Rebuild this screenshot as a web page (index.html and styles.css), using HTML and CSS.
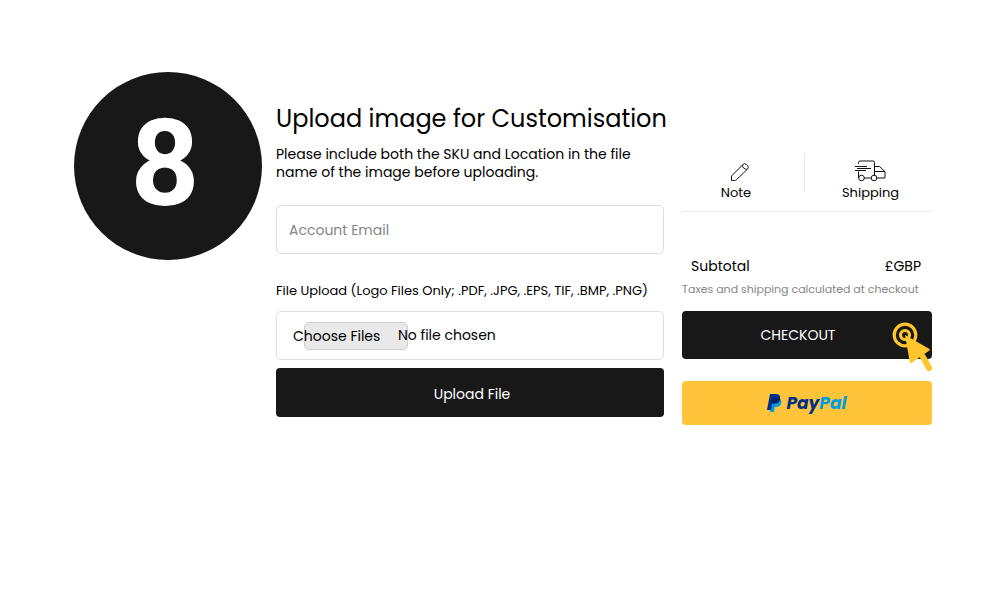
FILE: index.html
```html
<!DOCTYPE html>
<html lang="en">

<head>
    <meta charset="UTF-8">
    <meta name="viewport" content="width=device-width, initial-scale=1.0">
    <title>Upload image for Customisation</title>
    <link rel="stylesheet" href="styles.css">
</head>

<body>
    <main class="content">
        <div class="step">8</div>

        <form class="upload">
            <h1>Upload image for Customisation</h1>
            <p class="intro">Please include both the SKU and Location in the file name of the image before uploading.</p>
            <input class="email" type="email" placeholder="Account Email" aria-label="Account Email">
            <label class="fileLabel" for="files">File Upload (Logo Files Only; .PDF, .JPG, .EPS, TIF, .BMP, .PNG)</label>
            <div class="fileBox">
                <span class="choose">Choose Files</span>
                <span class="chosen">No file chosen</span>
                <input type="file" id="files" multiple>
            </div>
            <button class="btn" type="button">Upload File</button>
        </form>

        <aside class="cart">
            <div class="tools">
                <a class="tool note" href="#">
                    <svg width="28" height="20" viewBox="-8 1 28 20">
                        <path d="M1.500 18.500v-4.500L13 2.400q1.700-1.600 3.300 0l1.300 1.300q1.600 1.600 0 3.300L6.200 18q-.6.500-1.500.5h-2q-1.200 0-1.200-1.200zM12.500 3.100q-.1 3.500 4.400 4.400" />
                    </svg>
                    Note
                </a>
                <span class="line"></span>
                <a class="tool shipping" href="#">
                    <svg width="32" height="22" viewBox="1 1 32 22">
                        <path d="M4.500 4V2.500Q4.500 1 6 1h13q1.500 0 1.500 1.500V16M4.500 11.500V18M10 18h7M22.500 18H31v-6.500L25.500 6.500h-5M21 11.500h10M1 6.500h12M3 8.500h14M1 10.500h11" />
                        <circle cx="7.500" cy="18" r="2.800" />
                        <circle cx="20" cy="18" r="2.800" />
                    </svg>
                    Shipping
                </a>
            </div>
            <div class="subtotal">
                <span>Subtotal</span>
                <span>£GBP</span>
            </div>
            <p class="taxes">Taxes and shipping calculated at checkout</p>
            <div class="checkout">
                <button class="btn" type="button">CHECKOUT</button>
                <svg class="pointer" width="42" height="52" viewBox="0 0 42 52">
                    <g fill="none" stroke="#ffc52d">
                        <circle cx="14" cy="14" r="10.800" stroke-width="3.200" />
                        <circle cx="14" cy="14" r="4.500" stroke-width="3.200" />
                        <path d="M32 36l6 11" stroke-width="6" stroke-linecap="round" />
                    </g>
                    <path d="M14 14l24.500 14q1 1-.5 1.700L20.500 42q-1.500.6-1.700-1z" fill="#ffc52d" />
                </svg>
            </div>
            <button class="paypal" type="button" aria-label="PayPal">
                <svg width="15" height="20" viewBox="0 0 15 20">
                    <path d="M5 5h7q3 1.500 2.200 5-.9 4-5.200 4H7.700L7 19H3.200z" fill="#009cde" />
                    <path d="M3 1h6.500q4.500.3 3.500 5-1 4.500-5.500 4.500H5L4 17H0z" fill="#003087" />
                    <path d="M5.500 5.500q.2-.7 1-.7h5q1 0 1.500.4-.8 5.300-5.500 5.300H4.700z" fill="#012169" />
                </svg>
                <span class="pay">Pay<span class="pal">Pal</span></span>
            </button>
        </aside>
    </main>
</body>

</html>
```

FILE: styles.css
```css
* {
    box-sizing: border-box;
}

body,
h1,
p {
    padding: 0;
    margin: 0;
}

body,
input,
button {
    font-family: Poppins, Inter, sans-serif;
    font-size: 14px;
}

body {
    background-color: #fff;
    color: #000;
}

.content {
    display: grid;
    grid-template-columns: 188px minmax(0, 1fr) 250px;
    align-items: start;
    padding: 72px 68px 0 74px;
}

/* step number */
.step {
    display: flex;
    align-items: center;
    justify-content: center;
    height: 188px;
    padding: 0 6px 4px 0;
    border-radius: 50%;
    background-color: #181818;
    color: #fff;
    font-family: Roboto, sans-serif;
    font-size: 120px;
    font-weight: 700;
    line-height: 1;
}

/* upload form */
.upload {
    display: flex;
    flex-direction: column;
    padding: 28px 18px 0 14px;
}

h1 {
    font-size: 24px;
    font-weight: 400;
    line-height: 38px;
    white-space: nowrap;
}

.intro {
    margin-top: 7px;
    line-height: 18px;
}

.email {
    height: 49px;
    margin-top: 24px;
    padding: 2px 12px 0;
    border: 1px solid #dedede;
    border-radius: 5px;
}

.email::placeholder {
    color: #868686;
}

.fileLabel {
    margin-top: 27px;
    font-size: 13px;
    line-height: 20px;
    white-space: nowrap;
}

.fileBox {
    display: flex;
    align-items: center;
    position: relative;
    height: 49px;
    margin-top: 10px;
    padding: 0 16px;
    border: 1px solid #dedede;
    border-radius: 5px;
}

.choose {
    width: 105px;
    padding-top: 2px;
}

/* grey chip behind the text */
.choose::before {
    content: "";
    position: absolute;
    z-index: -1;
    left: 27px;
    top: 10px;
    width: 102px;
    height: 26px;
    border: 1px solid #cfcfcf;
    border-radius: 5px;
    background-color: #e9e9e9;
}

.fileBox input {
    position: absolute;
    inset: 0;
    width: 100%;
    opacity: 0;
    cursor: pointer;
}

.btn {
    width: 100%;
    height: 48px;
    border: 0;
    border-radius: 4px;
    background-color: #181818;
    color: #fff;
}

.upload .btn {
    height: 49px;
    margin-top: 8px;
    padding: 3px 4px 0 8px;
}

/* cart panel */
.tools {
    display: grid;
    grid-template-columns: 122px 1px 1fr;
    margin-top: 81px;
    height: 59px;
    border-bottom: 1px solid #e9e9e9;
}

.tool {
    display: flex;
    flex-direction: column;
    align-items: center;
    justify-content: flex-end;
    height: 50px;
    color: #000;
    font-size: 13px;
    line-height: 20px;
    text-decoration: none;
}

.note {
    padding-right: 14px;
}

.shipping {
    padding-left: 4px;
}

.line {
    height: 39px;
    background-color: #e9e9e9;
}

.tool svg {
    flex: none;
    overflow: visible;
    fill: none;
    stroke: #111;
}

.subtotal {
    display: flex;
    justify-content: space-between;
    margin-top: 44px;
    padding: 0 11px 0 9px;
    line-height: 20px;
}

.taxes {
    margin-top: 4px;
    color: #868686;
    font-size: 11px;
    line-height: 18px;
    white-space: nowrap;
}

.checkout {
    position: relative;
    margin-top: 13px;
}

.checkout .btn {
    display: block;
    padding-right: 24px;
}

.pointer {
    position: absolute;
    right: -1px;
    top: 10px;
}

.paypal {
    display: flex;
    align-items: center;
    justify-content: center;
    gap: 4px;
    width: 100%;
    height: 44px;
    margin-top: 22px;
    border: 0;
    border-radius: 4px;
    background-color: #ffc439;
}

.pay {
    color: #003087;
    font-size: 17px;
    font-style: italic;
    font-weight: 700;
}

.pal {
    color: #009cde;
}
```
